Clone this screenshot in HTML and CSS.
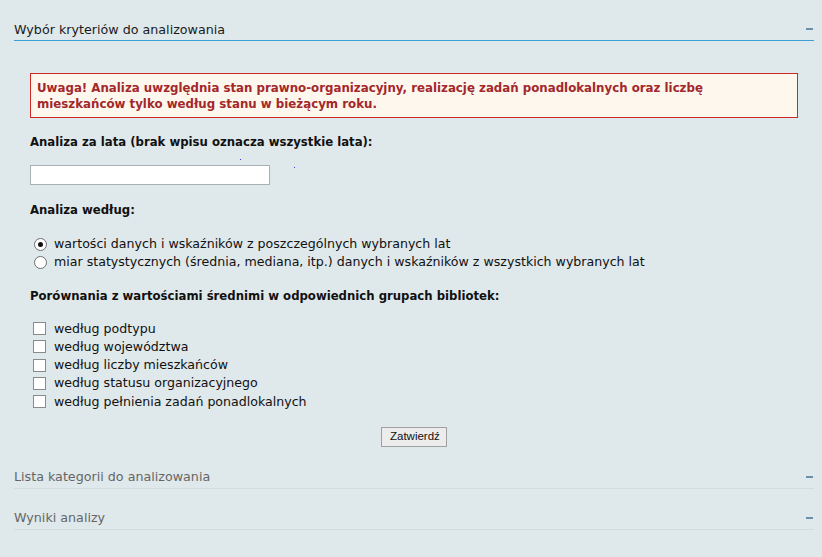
FILE: index.html
```html
<!DOCTYPE html>
<html lang="pl">
<head>
<meta charset="utf-8">
<title>Analiza</title>
<link rel="stylesheet" href="styles.css">
</head>
<body>
<div class="page">
  <div class="panel">
    <div class="panel-head active">
      <span class="panel-title">Wybór kryteriów do analizowania</span>
      <span class="toggle"></span>
    </div>
    <div class="panel-body">
      <div class="warning">Uwaga! Analiza uwzględnia stan prawno-organizacyjny, realizację zadań ponadlokalnych oraz liczbę mieszkańców tylko według stanu w bieżącym roku.</div>
      <div class="label">Analiza za lata (brak wpisu oznacza wszystkie lata):</div>
      <div class="input-row">
        <input type="text" class="years">
        <span class="dot dot1"></span>
        <span class="dot dot2"></span>
      </div>
      <div class="label">Analiza według:</div>
      <div class="options radios">
        <label class="opt"><input type="radio" name="mode" checked><span>wartości danych i wskaźników z poszczególnych wybranych lat</span></label>
        <label class="opt"><input type="radio" name="mode"><span>miar statystycznych (średnia, mediana, itp.) danych i wskaźników z wszystkich wybranych lat</span></label>
      </div>
      <div class="label">Porównania z wartościami średnimi w odpowiednich grupach bibliotek:</div>
      <div class="options">
        <label class="opt"><input type="checkbox"><span>według podtypu</span></label>
        <label class="opt"><input type="checkbox"><span>według województwa</span></label>
        <label class="opt"><input type="checkbox"><span>według liczby mieszkańców</span></label>
        <label class="opt"><input type="checkbox"><span>według statusu organizacyjnego</span></label>
        <label class="opt"><input type="checkbox"><span>według pełnienia zadań ponadlokalnych</span></label>
      </div>
      <div class="actions"><button type="button" class="submit">Zatwierdź</button></div>
    </div>
  </div>
  <div class="panel">
    <div class="panel-head">
      <span class="panel-title">Lista kategorii do analizowania</span>
      <span class="toggle"></span>
    </div>
  </div>
  <div class="panel">
    <div class="panel-head">
      <span class="panel-title">Wyniki analizy</span>
      <span class="toggle"></span>
    </div>
  </div>
</div>
</body>
</html>
```
FILE: styles.css
```css
html, body {
  margin: 0;
  padding: 0;
  background: #dfe8ea;
}
body {
  font-family: "DejaVu Sans", Verdana, sans-serif;
  font-size: 12.6px;
  color: #111;
}
.page {
  padding: 18px 8px 0 14px;
}
.panel-head {
  display: flex;
  align-items: center;
  justify-content: space-between;
  height: 22px;
  border-bottom: 1px solid #d3dddf;
  margin-bottom: 18px;
}
.panel-head.active {
  border-bottom: 1px solid #3c9fd6;
  margin-bottom: 32px;
}
.panel-title {
  font-size: 12.7px;
  color: #666;
}
.panel-head.active .panel-title {
  color: #1a1a1a;
}
.toggle {
  width: 7px;
  height: 2px;
  background: #6a8fa8;
  margin-right: 1px;
}
.panel-body {
  padding: 0 16px 0 16px;
}
.warning {
  border: 1px solid #d02727;
  background: #fdf7ee;
  color: #a3282b;
  font-weight: bold;
  font-size: 11.8px;
  padding: 6px 6px 5px 6px;
  line-height: 16px;
  margin-top: 2px;
}
.label {
  font-weight: bold;
  font-size: 11.7px;
  margin-top: 16px;
  line-height: 16px;
}
.input-row {
  position: relative;
  margin-top: 15px;
  margin-bottom: 17px;
  height: 20px;
}
.years {
  width: 240px;
  height: 20px;
  box-sizing: border-box;
  border: 1px solid #a8b0b4;
  background: #fff;
  margin: 0;
  padding: 1px 3px;
}
.dot {
  position: absolute;
  width: 1px;
  height: 1px;
  background: #2b3fd0;
}
.dot1 { left: 210px; top: -6px; }
.dot2 { left: 264px; top: 2px; }
.options {
  display: flex;
  flex-direction: column;
  margin-top: 16px;
}
.options.radios {
  margin-top: 17px;
}
.opt {
  display: flex;
  align-items: center;
  height: 18.25px;
}
.opt input {
  appearance: none;
  -webkit-appearance: none;
  box-sizing: border-box;
  margin: 0 8px 0 3px;
  width: 13px;
  height: 13px;
  background: #fff;
  border: 1px solid #7d7d7d;
  flex: none;
  display: grid;
  place-items: center;
}
.opt input[type="radio"] {
  border-radius: 50%;
  border-color: #6f6f6f;
  margin-left: 4px;
  margin-right: 7px;
}
.opt input[type="radio"]:checked::after {
  content: "";
  width: 5px;
  height: 5px;
  border-radius: 50%;
  background: #111;
}
.opt input[type="checkbox"] {
  border-color: #8a8a8a;
}
.opt span {
  line-height: 16px;
}
.actions {
  display: flex;
  justify-content: center;
  margin-top: 16px;
  margin-bottom: 19px;
}
.submit {
  font-family: "Liberation Sans", Arial, sans-serif;
  font-size: 11.5px;
  color: #111;
  background: #ececec;
  border: 1px solid #a0a0a0;
  padding: 1px 8px 2px;
  height: 20px;
  width: 66px;
}
```
